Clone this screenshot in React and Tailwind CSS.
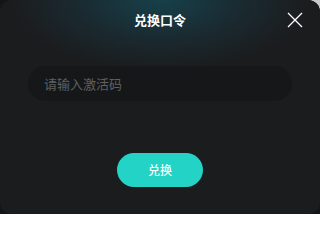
export default function App() {
  return (
    <div className="w-[320px] h-[214px] bg-[radial-gradient(circle_at_top_right,#c9c9c9_14px,#141516_15px)]">
      <div
        className="relative w-full h-full rounded-[12px] overflow-hidden bg-[#1b1c1e] flex flex-col items-center"
        style={{ fontFamily: '"Noto Sans CJK SC", "Noto Sans", sans-serif' }}
      >
        <div className="absolute inset-x-0 top-0 h-[90px] bg-[radial-gradient(ellipse_150px_70px_at_50%_0%,#17404b_0%,#1a2a30_55%,#1b1c1e_100%)]" />
        <div className="relative h-[40px] flex items-center justify-center text-white text-[13px] font-bold">
          兑换口令
        </div>
        <button className="absolute right-[17px] top-[12px] w-[16px] h-[16px] text-white">
          <svg viewBox="0 0 16 16" className="w-[16px] h-[16px]" fill="none" stroke="currentColor" strokeWidth="1.3">
            <path d="M1 1L15 15M15 1L1 15" />
          </svg>
        </button>
        <div className="relative mt-[26px] w-[264px] h-[35px] rounded-full bg-[#161718] flex items-center px-[16px] text-[13px] text-[#5e6062]">
          请输入激活码
        </div>
        <button className="relative mt-[52px] w-[86px] h-[34px] rounded-full bg-[#23d4c6] text-white text-[12px] font-medium flex items-center justify-center">
          兑换
        </button>
      </div>
    </div>
  );
}
